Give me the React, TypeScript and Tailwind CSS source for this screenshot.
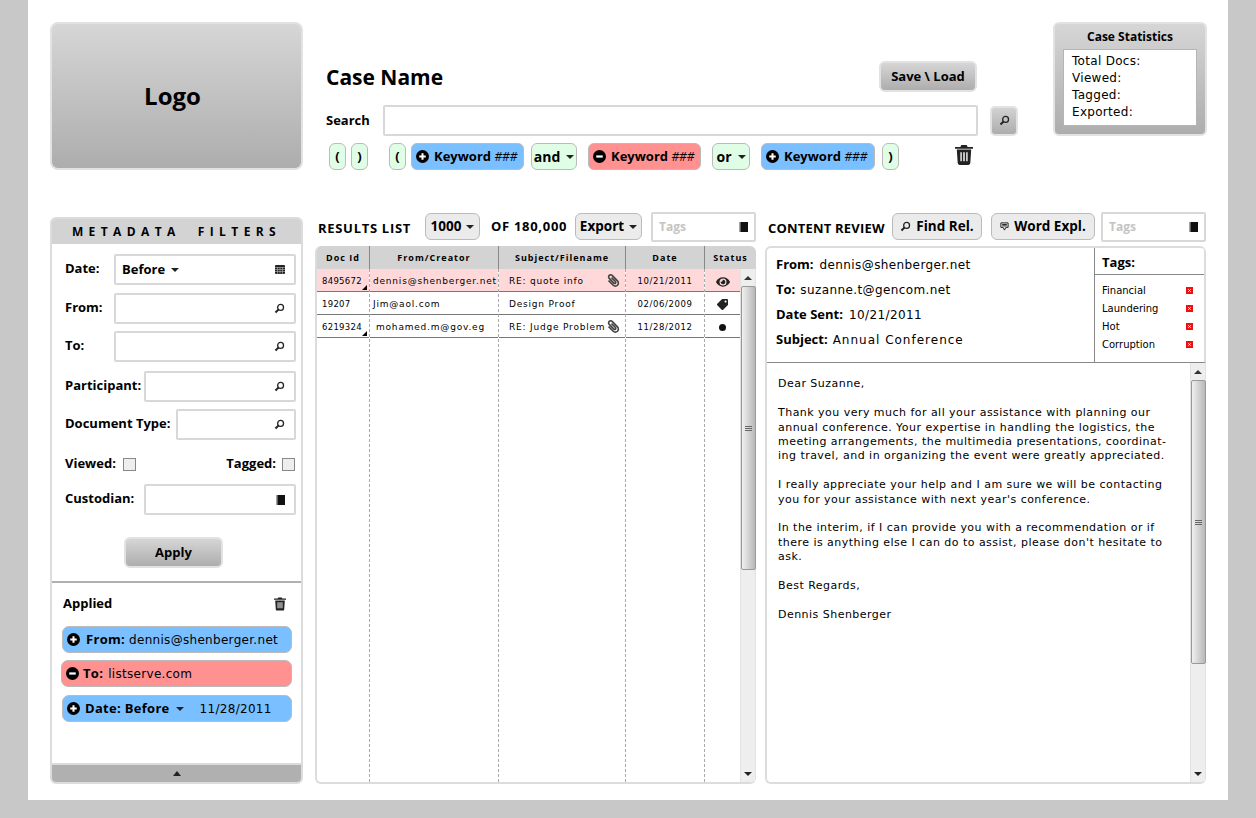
import { FaEye, FaTag, FaPaperclip } from "react-icons/fa";

const bold = "font-['Open_Sans',sans-serif] font-bold";

function SearchIcon({ className = "" }: { className?: string }) {
    return (
        <svg viewBox="0 0 12 12" className={className} fill="none" stroke="currentColor">
            <circle cx="7.2" cy="4.8" r="3.2" strokeWidth="1.4" />
            <path d="M4.8 7.2 L1.6 10.4" strokeWidth="2.2" />
        </svg>
    );
}

function TrashIcon({ className = "" }: { className?: string }) {
    return (
        <svg viewBox="0 0 20 22" className={className} fill="currentColor">
            <path d="M7 0h6l1 2h6v2H0V2h6z" />
            <path d="M2 5h16l-1 15q-.2 2-2 2H5q-1.800 0-2-2zM6 8v10h1.500V8zM9.200 8v10h1.600V8zM12.500 8v10H14V8z" fillRule="evenodd" />
        </svg>
    );
}

function PlusCircle() {
    return (
        <svg viewBox="0 0 14 14" className="w-[13px] h-[13px] shrink-0">
            <circle cx="7" cy="7" r="7" fill="#000" />
            <path d="M3.500 7h7M7 3.500v7" stroke="#fff" strokeWidth="2.200" />
        </svg>
    );
}

function MinusCircle() {
    return (
        <svg viewBox="0 0 14 14" className="w-[13px] h-[13px] shrink-0">
            <circle cx="7" cy="7" r="7" fill="#000" />
            <path d="M3.500 7h7" stroke="#fff" strokeWidth="2.400" />
        </svg>
    );
}

function Caret({ className = "" }: { className?: string }) {
    return <span className={`inline-block w-0 h-0 border-x-[4px] border-x-transparent border-t-[4px] border-t-[#222] ${className}`} />;
}

function BookIcon() {
    return (
        <svg viewBox="0 0 9 10" className="w-[9px] h-[10px] shrink-0">
            <rect x="1.500" width="7.500" height="10" fill="#111" />
            <path d="M0 1h2M0 3h2M0 5h2M0 7h2M0 9h2" stroke="#333" strokeWidth="0.900" />
        </svg>
    );
}

function CalendarIcon() {
    return (
        <svg viewBox="0 0 10 9" className="w-[10px] h-[9px]">
            <rect width="10" height="9" rx="1" fill="#222" />
            <path d="M0 2.500h10M0 4.500h10M0 6.500h10M2.500 2v7M5 2v7M7.500 2v7" stroke="#bbb" strokeWidth="0.600" />
        </svg>
    );
}

function Paren({ text }: { text: string }) {
    return (
        <div className={`w-[17px] h-[27px] flex items-center justify-center rounded-[6px] border border-[#bbb] bg-[#e0fde6] text-[13px] text-black ${bold}`}>
            {text}
        </div>
    );
}

function KeywordChip({ negative, width }: { negative?: boolean; width: string }) {
    return (
        <div className={`h-[27px] flex items-center pl-[4px] rounded-[6px] border border-[#bbb] text-[13px] text-black gap-[5px] ${bold} ${width} ${negative ? "bg-[#ff9191]" : "bg-[#7abfff]"}`}>
            {negative ? <MinusCircle /> : <PlusCircle />}
            <span className="whitespace-nowrap">
                Keyword <span className="font-normal italic text-[12px]">###</span>
            </span>
        </div>
    );
}

function OpChip({ text, width }: { text: string; width: string }) {
    return (
        <div className={`h-[27px] flex items-center justify-center gap-[6px] rounded-[6px] border border-[#bbb] bg-[#e0fde6] text-[14px] text-black ${bold} ${width}`}>
            {text}
            <Caret />
        </div>
    );
}

function GrayButton({ text, className }: { text: string; className: string }) {
    return (
        <div className={`flex items-center justify-center rounded-[6px] border-2 border-[#e2e2e2] bg-gradient-to-b from-[#d6d6d6] to-[#adadad] text-[13px] text-black ${bold} ${className}`}>
            {text}
        </div>
    );
}

function FilterRow({ label, inputWidth, icon, top, children }: { label: string; inputWidth: string; icon: React.ReactNode; top: string; children?: React.ReactNode }) {
    return (
        <div className={`flex items-start justify-between pl-[13px] pr-[5px] ${top}`}>
            <span className={`text-[13px] text-black whitespace-nowrap mt-[5px] ${bold}`}>{label}</span>
            <div className={`h-[31px] shrink-0 flex items-center justify-between pr-[9px] pl-[6px] border-2 border-[#d8d8d8] rounded-[2px] ${inputWidth}`}>
                <span className={`flex items-center gap-[6px] text-[13px] ${bold}`}>{children}</span>
                {icon}
            </div>
        </div>
    );
}

function AppliedChip({ color, shift, children }: { color: string; shift: string; children: React.ReactNode }) {
    return (
        <div className={`h-[27px] flex items-center rounded-[7px] border border-[#bbb] text-[12px] tracking-[0.3px] whitespace-nowrap text-black ${color} ${shift}`}>
            {children}
        </div>
    );
}

function ScrollBar() {
    return (
        <div className="w-[16px] shrink-0 flex flex-col items-center bg-[#eeeeee] border-x border-[#e2e2e2]">
            <div className="h-[17px] flex items-center justify-center">
                <span className="w-0 h-0 border-x-[4px] border-x-transparent border-b-[4px] border-b-[#333]" />
            </div>
            <div className="w-[15px] h-[284px] flex flex-col items-center justify-center gap-[1px] border border-[#999] rounded-[2px] bg-gradient-to-r from-[#f0f0f0] to-[#b8b8b8]">
                <span className="w-[7px] h-px bg-[#666]" />
                <span className="w-[7px] h-px bg-[#666]" />
                <span className="w-[7px] h-px bg-[#666]" />
            </div>
            <div className="flex-1" />
            <div className="h-[17px] flex items-center justify-center">
                <Caret />
            </div>
        </div>
    );
}

function Column({ title, width, children }: { title: string; width: string; children: React.ReactNode }) {
    return (
        <div className={`flex flex-col shrink-0 ${width}`}>
            <div className={`h-[23px] flex items-center justify-center bg-[#d3d3d3] text-[9px] tracking-[1px] text-black whitespace-nowrap border-r border-[#888] ${bold}`}>
                {title}
            </div>
            <div className="flex-1 border-r border-dashed border-[#aaa]">{children}</div>
        </div>
    );
}

function Cell({ pink, center, corner, digits, children }: { pink?: boolean; center?: boolean; corner?: boolean; digits?: string; children: React.ReactNode }) {
    return (
        <div className={`relative h-[23px] flex items-center pt-[3px] pl-[5px] pr-[5px] border-b border-[#777] text-black whitespace-nowrap ${digits ?? "text-[9px] tracking-[0.8px]"} ${pink ? "bg-[#ffd9d9]" : ""} ${center ? "justify-center" : ""}`}>
            {children}
            {corner && <span className="absolute right-[2px] bottom-[1px] w-0 h-0 border-l-[5px] border-l-transparent border-b-[5px] border-b-black" />}
        </div>
    );
}

function TagsBox() {
    return (
        <div className={`w-[105px] h-[30px] flex items-center justify-between pl-[6px] pr-[6px] border-2 border-[#d8d8d8] rounded-[2px] text-[12px] text-[#c4c4c4] ${bold}`}>
            Tags
            <BookIcon />
        </div>
    );
}

function ToolButton({ className, children }: { className: string; children: React.ReactNode }) {
    return (
        <div className={`h-[27px] flex items-center justify-center gap-[5px] rounded-[6px] border border-[#bbb] bg-[#ebebeb] text-[13.500px] text-black ${bold} ${className}`}>
            {children}
        </div>
    );
}

function TagRow({ name }: { name: string }) {
    return (
        <div className="h-[18px] flex items-center justify-between pl-[7px] pr-[11px] text-[10px] text-black">
            {name}
            <svg viewBox="0 0 7 7" className="w-[7px] h-[7px]">
                <rect width="7" height="7" fill="#ee1111" />
                <path d="M2.200 2.200l2.600 2.600M4.800 2.200L2.200 4.800" stroke="#fff" strokeWidth="0.900" />
            </svg>
        </div>
    );
}

const idText = "text-[8.500px] tracking-[0.3px]";
const dateText = "text-[8.500px] tracking-[0.6px]";
const headLabel = `text-[13px] tracking-normal ${bold}`;

function App() {
    return (
        <div className="w-[1256px] h-[818px] bg-[#c8c8c8] overflow-hidden font-['DejaVu_Sans',sans-serif]">
            <div className="w-[1200px] h-[800px] ml-[28px] bg-white pt-[22px] px-[22px]">
                {/* top header */}
                <div className="flex h-[148px]">
                    <div className={`w-[253px] h-[148px] shrink-0 pr-[8px] flex items-center justify-center rounded-[8px] border-2 border-[#e2e2e2] bg-gradient-to-b from-[#d6d6d6] to-[#adadad] text-[24px] text-black ${bold}`}>
                        Logo
                    </div>
                    <div className="w-[717px] shrink-0 ml-[23px] flex flex-col">
                        <div className="h-[83px] flex items-end justify-between pr-[66px]">
                            <span className={`text-[21px] text-black leading-none mb-[17px] ${bold}`}>Case Name</span>
                            <GrayButton text="Save \ Load" className="w-[98px] h-[31px] mb-[13px]" />
                        </div>
                        <div className="flex items-center h-[31px]">
                            <span className={`w-[57px] text-[13px] text-black ${bold}`}>Search</span>
                            <div className="w-[595px] h-[31px] border-2 border-[#d8d8d8] rounded-[2px]" />
                            <div className="w-[28px] h-[30px] ml-[12px] flex items-center justify-center rounded-[5px] border-2 border-[#e2e2e2] bg-gradient-to-b from-[#d2d2d2] to-[#adadad] text-[#222]">
                                <SearchIcon className="w-[11px] h-[11px]" />
                            </div>
                        </div>
                        <div className="flex items-start mt-[7px] ml-[3px]">
                            <Paren text="(" />
                            <div className="ml-[5px]"><Paren text=")" /></div>
                            <div className="ml-[21px]"><Paren text="(" /></div>
                            <div className="ml-[5px]"><KeywordChip width="w-[113px]" /></div>
                            <div className="ml-[7px]"><OpChip text="and" width="w-[46px]" /></div>
                            <div className="ml-[11px]"><KeywordChip negative width="w-[113px]" /></div>
                            <div className="ml-[11px]"><OpChip text="or" width="w-[38px]" /></div>
                            <div className="ml-[11px]"><KeywordChip width="w-[114px]" /></div>
                            <div className="ml-[7px]"><Paren text=")" /></div>
                            <TrashIcon className="w-[18px] h-[22px] ml-[56px] mt-[1px] text-[#222]" />
                        </div>
                    </div>
                    <div className="w-[154px] h-[114px] shrink-0 ml-[10px] flex flex-col items-center rounded-[6px] border-2 border-[#e2e2e2] bg-gradient-to-b from-[#d6d6d6] to-[#adadad]">
                        <div className={`h-[25px] flex items-center text-[12px] text-black ${bold}`}>Case Statistics</div>
                        <div className="w-[134px] h-[77px] pl-[8px] pt-[3px] bg-white border border-[#b5b5b5] text-[12px] tracking-[0.3px] leading-[17px] text-black">
                            <div>Total Docs:</div>
                            <div>Viewed:</div>
                            <div>Tagged:</div>
                            <div>Exported:</div>
                        </div>
                    </div>
                </div>

                <div className="flex mt-[42px] h-[572px]">
                    {/* metadata filters */}
                    <div className="w-[254px] mt-[5px] h-[567px] flex flex-col border-2 border-[#dcdcdc] rounded-[6px] overflow-hidden">
                        <div className={`h-[25px] shrink-0 flex items-center justify-center bg-[#d3d3d3] text-[12px] tracking-[5.400px] text-black whitespace-pre ${bold}`}>
                            METADATA  FILTERS
                        </div>
                        <FilterRow label="Date:" inputWidth="w-[182px]" icon={<CalendarIcon />} top="mt-[10px]">
                            Before <Caret />
                        </FilterRow>
                        <FilterRow label="From:" inputWidth="w-[182px]" icon={<SearchIcon className="w-[11px] h-[11px] text-[#222]" />} top="mt-[8px]" />
                        <FilterRow label="To:" inputWidth="w-[182px]" icon={<SearchIcon className="w-[11px] h-[11px] text-[#222]" />} top="mt-[7px]" />
                        <FilterRow label="Participant:" inputWidth="w-[152px]" icon={<SearchIcon className="w-[11px] h-[11px] text-[#222]" />} top="mt-[9px]" />
                        <FilterRow label="Document Type:" inputWidth="w-[120px]" icon={<SearchIcon className="w-[11px] h-[11px] text-[#222]" />} top="mt-[7px]" />
                        <div className={`flex items-center justify-between pl-[13px] pr-[6px] mt-[15px] h-[18px] text-[13px] text-black ${bold}`}>
                            <span className="flex items-center gap-[7px]">
                                Viewed:
                                <span className="w-[13px] h-[13px] border border-[#888] bg-[#eee]" />
                            </span>
                            <span className="flex items-center gap-[6px]">
                                Tagged:
                                <span className="w-[13px] h-[13px] border border-[#888] bg-[#eee]" />
                            </span>
                        </div>
                        <FilterRow label="Custodian:" inputWidth="w-[152px]" icon={<BookIcon />} top="mt-[11px]" />
                        <GrayButton text="Apply" className="w-[99px] h-[31px] mt-[22px] ml-[72px] shrink-0" />
                        <div className="h-[2px] mt-[13px] shrink-0 bg-[#b0b0b0]" />
                        <div className={`flex items-center justify-between pl-[11px] pr-[15px] mt-[13px] h-[16px] text-[13px] text-black ${bold}`}>
                            Applied
                            <TrashIcon className="w-[12px] h-[14px] text-[#222]" />
                        </div>
                        <div className="flex flex-col mt-[14px] pr-[9px]">
                            <AppliedChip color="bg-[#7abfff]" shift="ml-[10px] pl-[4px]">
                                <PlusCircle />
                                <span className={`ml-[6px] text-[13px] ${bold}`}>From:</span>
                                <span className="ml-[4px]">dennis@shenberger.net</span>
                            </AppliedChip>
                            <AppliedChip color="bg-[#ff9191] mt-[7px]" shift="ml-[9px] pl-[4px]">
                                <MinusCircle />
                                <span className={`ml-[4px] text-[13px] ${bold}`}>To:</span>
                                <span className="ml-[5px]">listserve.com</span>
                            </AppliedChip>
                            <AppliedChip color="bg-[#7abfff] mt-[8px]" shift="ml-[10px] pl-[4px]">
                                <PlusCircle />
                                <span className={`ml-[5px] text-[13px] ${bold}`}>Date: Before</span>
                                <Caret className="ml-[6px]" />
                                <span className="ml-[16px]">11/28/2011</span>
                            </AppliedChip>
                        </div>
                        <div className="flex-1" />
                        <div className="h-[19px] shrink-0 flex items-center justify-center bg-[#b0b0b0] border-t-2 border-[#dcdcdc]">
                            <span className="w-0 h-0 border-x-[4px] border-x-transparent border-b-[5px] border-b-[#222]" />
                        </div>
                    </div>

                    {/* results list */}
                    <div className="w-[441px] ml-[12px] flex flex-col">
                        <div className="h-[29px] flex items-center pl-[3px]">
                            <span className={`w-[107px] text-[13px] text-black tracking-[0.7px] mt-[4px] whitespace-nowrap ${bold}`}>RESULTS LIST</span>
                            <ToolButton className="w-[55px]">1000 <Caret /></ToolButton>
                            <span className={`ml-[11px] w-[84px] text-[13px] text-black tracking-[0.7px] whitespace-nowrap ${bold}`}>OF 180,000</span>
                            <ToolButton className="w-[67px]">Export <Caret /></ToolButton>
                            <div className="ml-[9px]"><TagsBox /></div>
                        </div>
                        <div className="flex-1 mt-[5px] flex flex-col border-2 border-[#dcdcdc] border-t-0 border-r-0 rounded-[6px] overflow-hidden">
                            <div className="flex-1 flex">
                                <Column title="Doc Id" width="w-[53px]">
                                    <Cell pink corner digits={idText}>8495672</Cell>
                                    <Cell digits={idText}>19207</Cell>
                                    <Cell corner digits={idText}>6219324</Cell>
                                </Column>
                                <Column title="From/Creator" width="w-[129px]">
                                    <Cell pink><span className="-ml-[2px]">dennis@shenberger.net</span></Cell>
                                    <Cell><span className="-ml-[2px]">Jim@aol.com</span></Cell>
                                    <Cell><span className="ml-[1px]">mohamed.m@gov.eg</span></Cell>
                                </Column>
                                <Column title="Subject/Filename" width="w-[127px]">
                                    <Cell pink>
                                        <span className="ml-[5px]">RE: quote info</span>
                                        <FaPaperclip className="absolute right-[5px] top-[5px] w-[13px] h-[13px] text-[#444] -scale-x-100" />
                                    </Cell>
                                    <Cell><span className="ml-[5px]">Design Proof</span></Cell>
                                    <Cell>
                                        <span className="ml-[5px]">RE: Judge Problem</span>
                                        <FaPaperclip className="absolute right-[5px] top-[5px] w-[13px] h-[13px] text-[#444] -scale-x-100" />
                                    </Cell>
                                </Column>
                                <Column title="Date" width="w-[79px]">
                                    <Cell pink center digits={dateText}>10/21/2011</Cell>
                                    <Cell center digits={dateText}>02/06/2009</Cell>
                                    <Cell center digits={dateText}>11/28/2012</Cell>
                                </Column>
                                <div className="flex-1 flex flex-col">
                                    <div className={`h-[23px] flex items-center justify-center bg-[#d3d3d3] text-[9px] tracking-[1px] text-black ${bold}`}>Status</div>
                                    <div className="flex-1 flex">
                                        <div className="flex-1">
                                            <Cell pink center><FaEye className="w-[14px] h-[14px] text-[#222]" /></Cell>
                                            <Cell center><FaTag className="w-[11px] h-[11px] text-[#222] rotate-90" /></Cell>
                                            <Cell center><span className="w-[7px] h-[7px] rounded-full bg-[#111]" /></Cell>
                                        </div>
                                        <ScrollBar />
                                    </div>
                                </div>
                            </div>
                        </div>
                    </div>

                    {/* content review */}
                    <div className="w-[441px] ml-[9px] flex flex-col">
                        <div className="h-[29px] flex items-center pl-[3px]">
                            <span className={`w-[124px] text-[13px] text-black tracking-[0.2px] whitespace-nowrap mt-[4px] ${bold}`}>CONTENT REVIEW</span>
                            <ToolButton className="w-[90px]">
                                <SearchIcon className="w-[11px] h-[11px] text-[#222]" /> Find Rel.
                            </ToolButton>
                            <ToolButton className="w-[104px] ml-[9px]">
                                <svg viewBox="0 0 10 10" className="w-[9px] h-[9px]" fill="none" stroke="#222" strokeWidth="1.100">
                                    <path d="M1 1h8v5H6.500L5 9 3.500 6H1zM2.500 2.800h5M2.500 4.300h5" />
                                </svg>
                                Word Expl.
                            </ToolButton>
                            <div className="ml-[6px]"><TagsBox /></div>
                        </div>
                        <div className="flex-1 mt-[5px] flex flex-col border-2 border-[#dcdcdc] border-r-0 rounded-[6px] overflow-hidden">
                            <div className="h-[115px] shrink-0 flex border-b border-[#888] border-r-2 border-r-[#dcdcdc]">
                                <div className="flex-1 pl-[9px] pt-[4px] text-[12px] text-black tracking-[0.4px]">
                                    <div className="h-[25px] flex items-center gap-[6px]"><span className={headLabel}>From:</span><span>dennis@shenberger.net</span></div>
                                    <div className="h-[25px] flex items-center gap-[5px]"><span className={headLabel}>To:</span><span>suzanne.t@gencom.net</span></div>
                                    <div className="h-[25px] flex items-center gap-[6px]"><span className={headLabel}>Date Sent:</span><span>10/21/2011</span></div>
                                    <div className="h-[25px] flex items-center gap-[5px]"><span className={headLabel}>Subject:</span><span className="tracking-[1px]">Annual Conference</span></div>
                                </div>
                                <div className="w-[110px] shrink-0 border-l border-[#888]">
                                    <div className={`h-[27px] flex items-center pl-[7px] pt-[3px] border-b border-[#888] text-[13px] text-black ${bold}`}>Tags:</div>
                                    <div className="pt-[6px]">
                                        <TagRow name="Financial" />
                                        <TagRow name="Laundering" />
                                        <TagRow name="Hot" />
                                        <TagRow name="Corruption" />
                                    </div>
                                </div>
                            </div>
                            <div className="flex-1 flex">
                                <div className="flex-1 pl-[11px] pt-[14.400px] text-[11px] leading-[14.400px] tracking-[0.47px] text-black whitespace-nowrap">
                                    <p>Dear Suzanne,</p>
                                    <p className="mt-[14.400px]">
                                        Thank you very much for all your assistance with planning our<br />
                                        annual conference. Your expertise in handling the logistics, the<br />
                                        meeting arrangements, the multimedia presentations, coordinat-<br />
                                        ing travel, and in organizing the event were greatly appreciated.
                                    </p>
                                    <p className="mt-[14.400px]">
                                        I really appreciate your help and I am sure we will be contacting<br />
                                        you for your assistance with next year's conference.
                                    </p>
                                    <p className="mt-[14.400px]">
                                        In the interim, if I can provide you with a recommendation or if<br />
                                        there is anything else I can do to assist, please don't hesitate to<br />
                                        ask.
                                    </p>
                                    <p className="mt-[14.400px]">Best Regards,</p>
                                    <p className="mt-[14.400px]">Dennis Shenberger</p>
                                </div>
                                <ScrollBar />
                            </div>
                        </div>
                    </div>
                </div>
            </div>
        </div>
    );
}

export default App;
